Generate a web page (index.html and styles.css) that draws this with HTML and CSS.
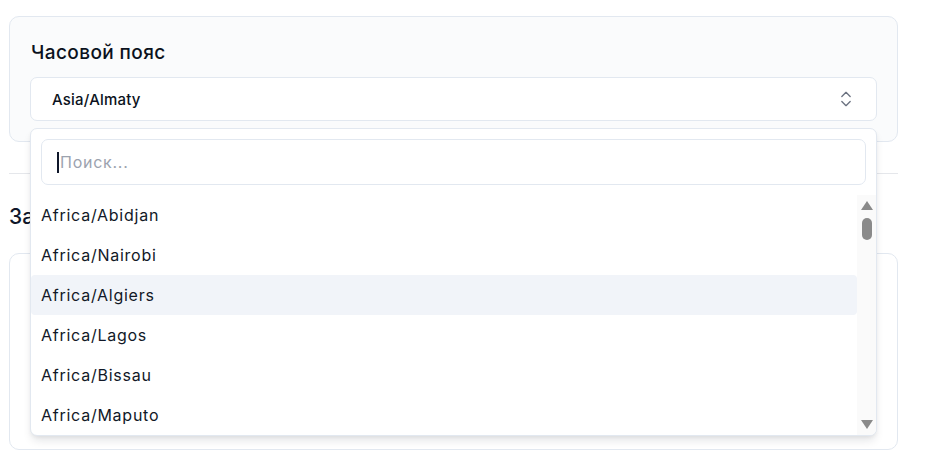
FILE: index.html
```html
<!DOCTYPE html>
<html lang="ru">
<head>
<meta charset="utf-8">
<title>Часовой пояс</title>
<link rel="stylesheet" href="styles.css">
</head>
<body>
<main class="page">
  <section class="card card-tz">
    <h2 class="card-title">Часовой пояс</h2>
    <div class="select-wrap">
      <button class="select" type="button">
        <span class="select-value">Asia/Almaty</span>
        <svg class="select-icon" width="20" height="20" viewBox="0 0 24 24" fill="none" stroke="currentColor" stroke-width="1.6" stroke-linecap="round" stroke-linejoin="round"><path d="m7 15 5 5 5-5"/><path d="m7 9 5-5 5 5"/></svg>
      </button>
      <div class="dropdown">
        <div class="search-pad">
          <div class="search"><span class="caret"></span><span class="placeholder">Поиск...</span></div>
        </div>
        <div class="list-wrap">
          <ul class="list">
            <li class="item">Africa/Abidjan</li>
            <li class="item">Africa/Nairobi</li>
            <li class="item item-active">Africa/Algiers</li>
            <li class="item">Africa/Lagos</li>
            <li class="item">Africa/Bissau</li>
            <li class="item">Africa/Maputo</li>
          </ul>
          <div class="scrollbar">
            <span class="sb-up"></span>
            <span class="sb-thumb"></span>
            <span class="sb-space"></span>
            <span class="sb-down"></span>
          </div>
        </div>
      </div>
    </div>
  </section>
  <hr class="sep">
  <h2 class="section-title">Заметки</h2>
  <section class="card card-second"></section>
</main>
</body>
</html>
```
FILE: styles.css
```css
* { box-sizing: border-box; }
html, body { margin: 0; padding: 0; background: #ffffff; }
body {
  font-family: Inter, "Noto Sans", "Liberation Sans", sans-serif;
  color: #0f172a;
  overflow: hidden;
}
.page {
  width: 889px;
  margin: 16px 0 0 9px;
}
.card {
  border: 1px solid #e2e8f0;
  border-radius: 10px;
  background: #fafbfc;
}
.card-tz {
  padding: 20px;
}
.card-title {
  margin: 0 0 8px 1px;
  font-size: 19px;
  line-height: 32px;
  font-weight: 500;
  letter-spacing: 0.4px;
  color: #0b1220;
}
.select-wrap {
  position: relative;
}
.select {
  display: flex;
  align-items: center;
  justify-content: space-between;
  width: 100%;
  height: 44px;
  padding: 0 20px 0 21px;
  background: #ffffff;
  border: 1px solid #e2e8f0;
  border-radius: 7px;
  font: inherit;
  font-size: 15px;
  font-weight: 500;
  letter-spacing: 0.2px;
  color: #0b1220;
  cursor: pointer;
}
.select-icon { color: #6b7280; display: block; }
.dropdown {
  position: absolute;
  left: 0;
  right: 0;
  top: calc(100% + 7px);
  background: #ffffff;
  border: 1px solid #e2e8f0;
  border-radius: 7px;
  box-shadow: 0 6px 10px -2px rgba(15, 23, 42, 0.12), 0 2px 4px -1px rgba(15, 23, 42, 0.06);
  overflow: hidden;
  z-index: 5;
}
.search-pad {
  padding: 10px;
}
.search {
  display: flex;
  align-items: center;
  height: 46px;
  padding: 0 15px;
  border: 1px solid #e2e8f0;
  border-radius: 7px;
  font-size: 16px;
  letter-spacing: 0.75px;
}
.caret {
  width: 2px;
  height: 21px;
  background: #0f172a;
  margin-right: 1px;
}
.placeholder { color: #9ca3af; }
.list-wrap {
  display: flex;
  height: 240px;
}
.list {
  flex: 1;
  margin: 0;
  padding: 0;
  list-style: none;
}
.item {
  height: 40px;
  padding: 1px 10px 0;
  line-height: 39px;
  font-size: 16px;
  letter-spacing: 0.75px;
  color: #111827;
  border-radius: 4px;
}
.item-active { background: #f1f4f9; }
.scrollbar {
  width: 19px;
  background: #fafafa;
  display: flex;
  flex-direction: column;
  align-items: center;
  padding: 6px 0 6px;
}
.sb-up, .sb-down {
  width: 0;
  height: 0;
  border-left: 6px solid transparent;
  border-right: 6px solid transparent;
}
.sb-up { border-bottom: 9px solid #8a8a8a; }
.sb-down { border-top: 9px solid #8a8a8a; }
.sb-thumb {
  width: 10px;
  height: 22px;
  border-radius: 5px;
  background: #8a8a8a;
  margin-top: 8px;
}
.sb-space { flex: 1; }
.sep {
  margin: 31px 0 0;
  border: 0;
  border-top: 1px solid #e5e7eb;
  height: 0;
}
.section-title {
  margin: 29px 0 0;
  font-size: 21px;
  line-height: 28px;
  font-weight: 500;
  color: #0f172a;
}
.card-second {
  margin-top: 22px;
  height: 197px;
  background: #ffffff;
}
```
